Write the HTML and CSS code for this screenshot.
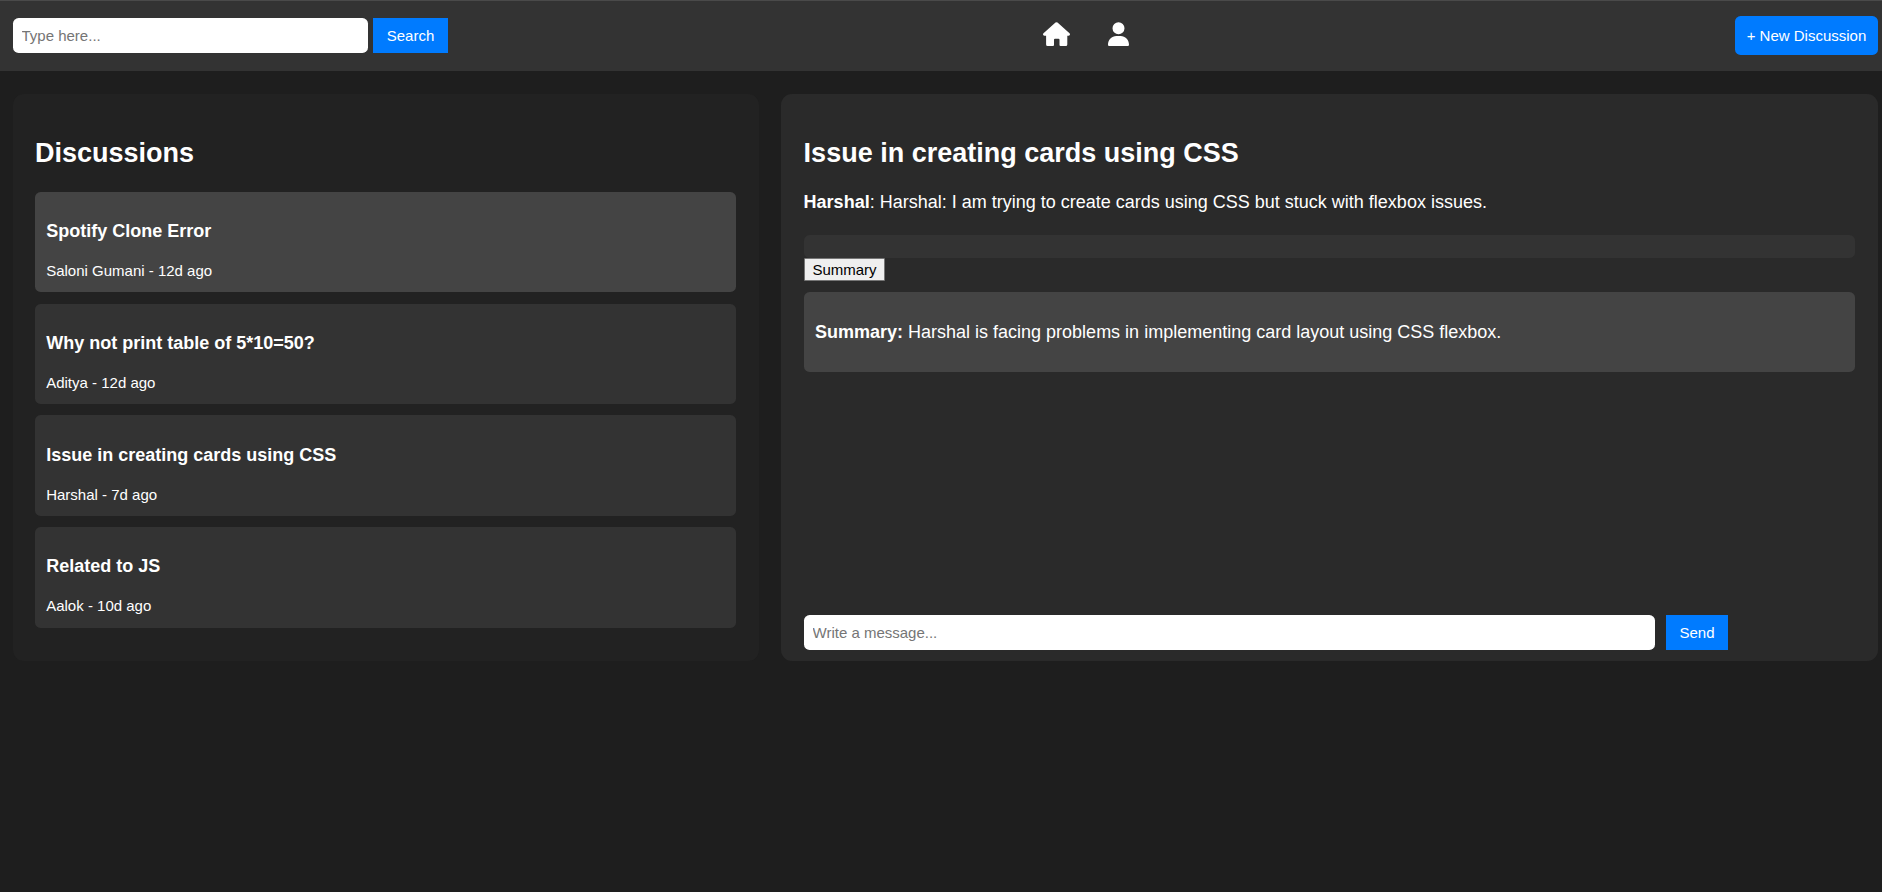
FILE: index.html
```html
<!DOCTYPE html>
<html lang="en">
<head>
<meta charset="utf-8">
<title>Discussions</title>
<link rel="stylesheet" href="styles.css">
</head>
<body>
<header class="navbar">
  <form class="search">
    <input class="field search-field" type="text" placeholder="Type here...">
    <button class="btn search-btn" type="button">Search</button>
  </form>
  <nav class="nav-icons">
    <svg class="icon-home" viewBox="0 -.2 27 24" aria-label="Home"><path fill="#fff" d="M12.500.4q1-.8 2 0L26.500 11q.8.900.3 1.800-.4.700-1.300.7H24.300V22.300Q24.300 23.800 22.800 23.800H17.500Q16.500 23.800 16.500 22.800V17.500Q16.500 16.500 15.500 16.500H12Q11 16.500 11 17.500V22.800Q11 23.800 10 23.800H4.600Q3.100 23.800 3.100 22.300V13.500H1.500Q.6 13.500.2 12.800-.3 11.900.5 11Z"/></svg>
    <svg class="icon-user" viewBox="0 -4 448 512" aria-label="Profile"><path fill="#fff" d="M224 256a128 128 0 1 0 0-256 128 128 0 1 0 0 256zm-45.700 40C79.800 296 0 375.800 0 482.300 0 498.700 13.300 508 29.700 508h388.600c16.400 0 29.700-9.300 29.700-25.700C448 375.800 368.200 296 269.700 296h-91.400z"/></svg>
  </nav>
  <button class="btn new-btn" type="button">+ New Discussion</button>
</header>
<main class="layout">
  <section class="panel list-panel">
    <h2 class="heading">Discussions</h2>
    <div class="cards">
      <article class="card active"><h3 class="card-title">Spotify Clone Error</h3><p class="meta">Saloni Gumani - 12d ago</p></article>
      <article class="card"><h3 class="card-title">Why not print table of 5*10=50?</h3><p class="meta">Aditya - 12d ago</p></article>
      <article class="card"><h3 class="card-title">Issue in creating cards using CSS</h3><p class="meta">Harshal - 7d ago</p></article>
      <article class="card"><h3 class="card-title">Related to JS</h3><p class="meta">Aalok - 10d ago</p></article>
    </div>
  </section>
  <section class="panel detail-panel">
    <h2 class="heading">Issue in creating cards using CSS</h2>
    <p class="message"><strong>Harshal</strong>: Harshal: I am trying to create cards using CSS but stuck with flexbox issues.</p>
    <div class="replies"></div>
    <button class="summary-btn" type="button">Summary</button>
    <div class="summary"><p class="message"><strong>Summary:</strong> Harshal is facing problems in implementing card layout using CSS flexbox.</p></div>
    <form class="composer">
      <input class="field message-field" type="text" placeholder="Write a message...">
      <button class="btn send-btn" type="button">Send</button>
    </form>
  </section>
</main>
</body>
</html>
```
FILE: styles.css
```css
* { box-sizing: border-box; }
body {
  margin: 0;
  min-height: 892px;
  background: #1e1e1e;
  color: #fff;
  font: 18px/20px Arial, "Liberation Sans", sans-serif;
}
h2, h3, p { margin: 0; }
input, button { font: 15px/17px Arial, "Liberation Sans", sans-serif; }
.navbar {
  display: flex;
  align-items: center;
  justify-content: space-between;
  height: 71px;
  padding: 0 4px 2px 13px;
  background: #333;
  border-top: 1px solid #4a4a4a;
}
.search { display: flex; gap: 5px; }
.field {
  height: 35px;
  padding: 0 8.500px;
  border: 0;
  border-radius: 5.600px;
  background: #fff;
}
.field::placeholder { color: #757575; }
.btn {
  height: 35px;
  padding: 0;
  border: 0;
  background: #007bff;
  color: #fff;
}
.search-field { width: 355px; }
.search-btn { width: 75px; }
.nav-icons { display: flex; align-items: center; gap: 38px; margin: 0 0 2px -11px; }
.icon-home { width: 27px; height: 24px; }
.icon-user { width: 21px; height: 24px; }
.new-btn { width: 143px; height: 39px; border-radius: 5.600px; }
.layout {
  display: flex;
  gap: 22px;
  height: 590px;
  padding: 23px 4px 0 13px;
}
.panel { padding: 44px 23px 0; border-radius: 11px; }
.list-panel { width: 746px; padding-left: 22px; background: #222; }
.detail-panel {
  display: flex;
  flex: 1;
  flex-direction: column;
  align-items: flex-start;
  padding-bottom: 11px;
  background: #2a2a2a;
}
.heading { font-size: 27px; line-height: 31px; }
.cards { display: grid; gap: 11.350px; margin-top: 22.900px; }
.card {
  height: 100.450px;
  padding: 29.200px 11.200px 0;
  border-radius: 5.600px;
  background: #333;
}
.card.active { background: #444; }
.card-title { font-size: 18px; line-height: 20px; }
.meta { margin-top: 21px; font-size: 15px; line-height: 17px; }
.heading + .message { margin-top: 23px; }
.detail-panel .heading, .heading + .message { margin-left: -0.400px; }
.replies {
  width: 100%;
  height: 23px;
  margin-top: 23px;
  border-radius: 5.600px;
  background: #333;
}
.summary-btn {
  width: 81px;
  height: 23px;
  padding: 0;
  border: 1px solid #767676;
  border-radius: 1px;
  background: #efefef;
  color: #000;
}
.summary {
  width: 100%;
  height: 80px;
  margin-top: 11px;
  padding: 30px 11px 0;
  border-radius: 5.600px;
  background: #444;
}
.composer { display: flex; gap: 11px; margin-top: auto; }
.message-field { width: 851px; }
.send-btn { width: 62px; }
```
